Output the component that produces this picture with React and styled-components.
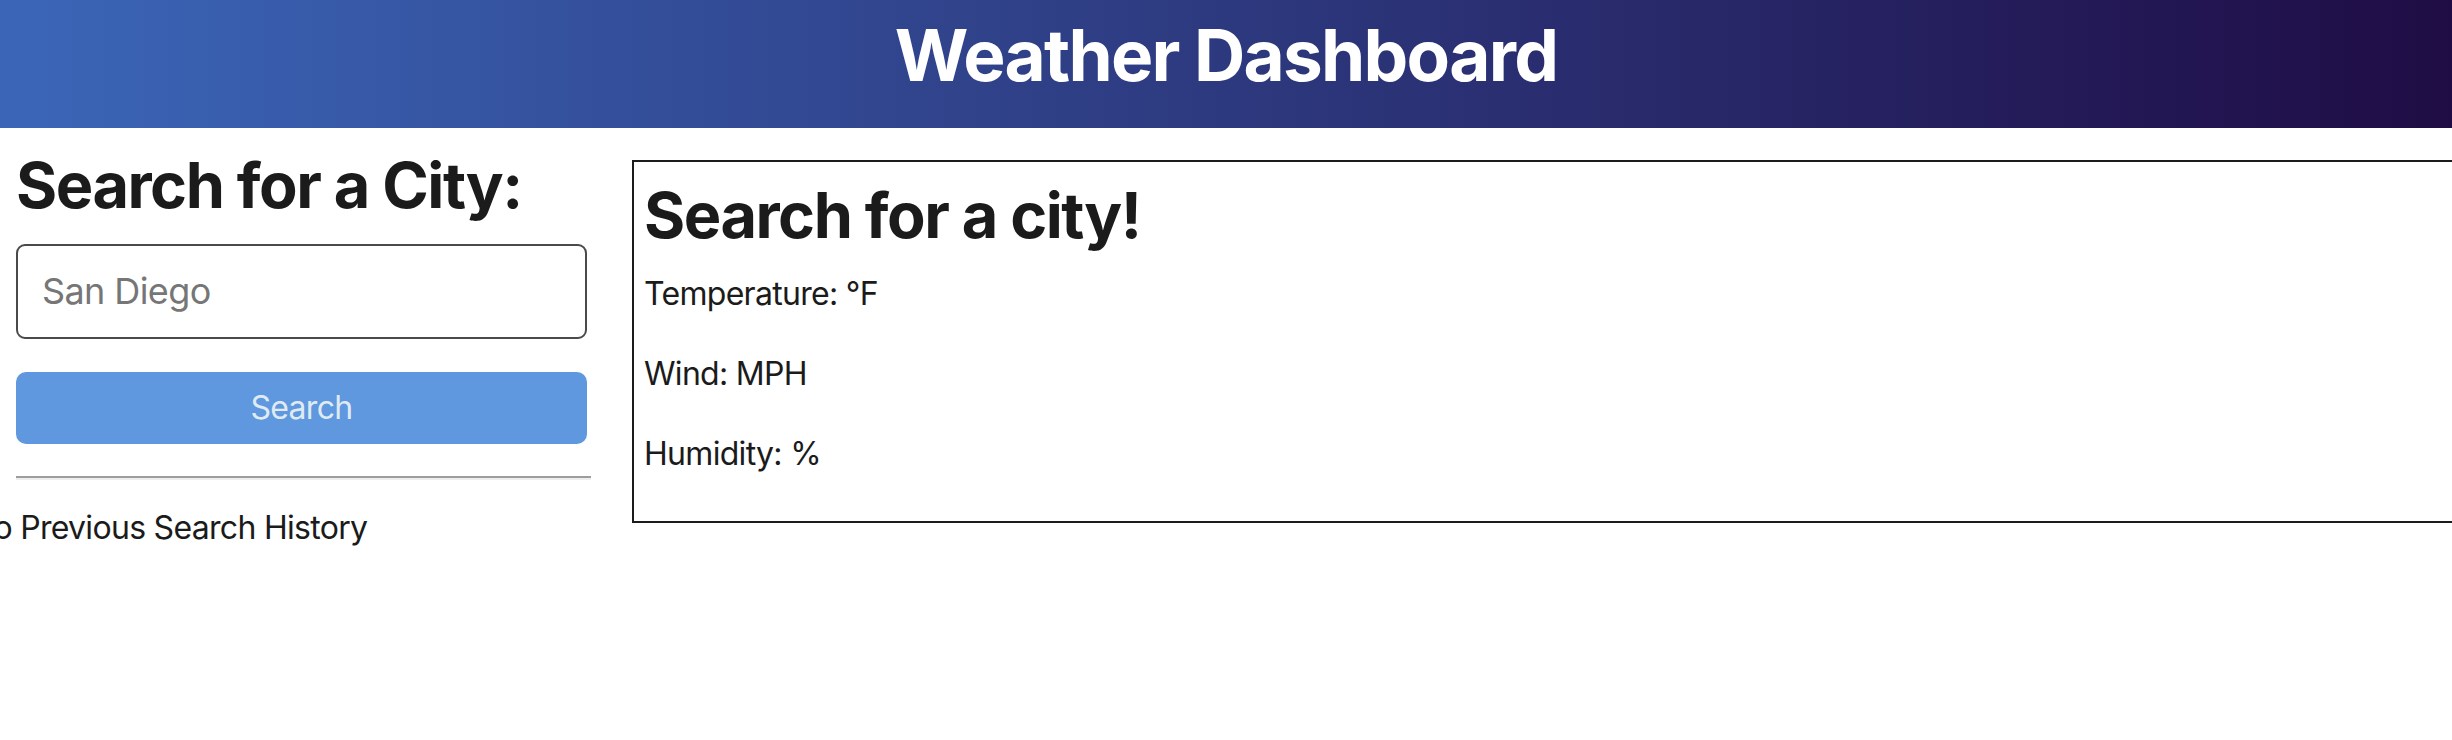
import styled, { createGlobalStyle } from "styled-components";

const GlobalStyle = createGlobalStyle`
  html, body {
    margin: 0;
    padding: 0;
    overflow-x: hidden;
    background: #fff;
  }
  body {
    font-family: Inter, "Noto Sans", "Liberation Sans", sans-serif;
    font-size: 32px;
    line-height: 1.5;
    letter-spacing: -0.7px;
    color: #1b1b1b;
  }
  * { box-sizing: border-box; }
`;

const Header = styled.header`
  height: 128px;
  padding-bottom: 16px;
  display: flex;
  align-items: center;
  justify-content: center;
  background: linear-gradient(to right, #3b66b8, #1f0c45);
`;

const Title = styled.h1`
  margin: 0;
  color: #fff;
  font-size: 71px;
  font-weight: 700;
  line-height: 1.2;
  letter-spacing: -1.7px;
`;

const Main = styled.main`
  display: flex;
  align-items: flex-start;
  gap: 41px;
  padding-left: 16px;
  overflow: hidden;
`;

const Sidebar = styled.aside`
  flex: 0 0 575px;
  display: flex;
  flex-direction: column;
  padding-top: 20px;
`;

const Heading = styled.h2`
  margin: 0 0 ${({ $gap }) => $gap}px;
  font-size: 63px;
  font-weight: 700;
  line-height: 1.2;
  letter-spacing: -1.5px;
  color: #1b1b1b;
`;

const CityInput = styled.input`
  width: calc(100% - 4px);
  height: 95px;
  padding: 0 24px;
  border: 2px solid #4a4a4a;
  border-radius: 9px;
  font-family: inherit;
  font-size: 36px;
  letter-spacing: -0.6px;
  color: #1b1b1b;
  outline: none;

  &::placeholder {
    color: #767676;
  }
`;

const SearchButton = styled.button`
  width: calc(100% - 4px);
  height: 72px;
  margin-top: 33px;
  border: none;
  border-radius: 10px;
  background: #5f98de;
  color: #dfeaf3;
  font-family: inherit;
  font-size: 32px;
  letter-spacing: -0.7px;
  cursor: pointer;
`;

const Divider = styled.hr`
  width: 100%;
  margin: 32px 0 24px;
  border: none;
  border-top: 2px solid #9d9d9d;
  border-bottom: 2px solid #eeeeee;
`;

const HistoryNote = styled.p`
  margin: 0 0 0 -46px;
  white-space: nowrap;
`;

const Forecast = styled.section`
  flex: 0 0 2000px;
  margin-top: 32px;
  padding: 16px 10px 11px;
  border: 2px solid #1b1b1b;
`;

const Stat = styled.p`
  margin: 0 0 32px;
`;

export default function App() {
  return (
    <>
      <GlobalStyle />
      <Header>
        <Title>Weather Dashboard</Title>
      </Header>
      <Main>
        <Sidebar>
          <Heading $gap={20}>Search for a City:</Heading>
          <CityInput type="text" placeholder="San Diego" />
          <SearchButton type="button">Search</SearchButton>
          <Divider />
          <HistoryNote>No Previous Search History</HistoryNote>
        </Sidebar>
        <Forecast>
          <Heading $gap={16}>Search for a city!</Heading>
          <Stat>Temperature: °F</Stat>
          <Stat>Wind: MPH</Stat>
          <Stat>Humidity: %</Stat>
        </Forecast>
      </Main>
    </>
  );
}
